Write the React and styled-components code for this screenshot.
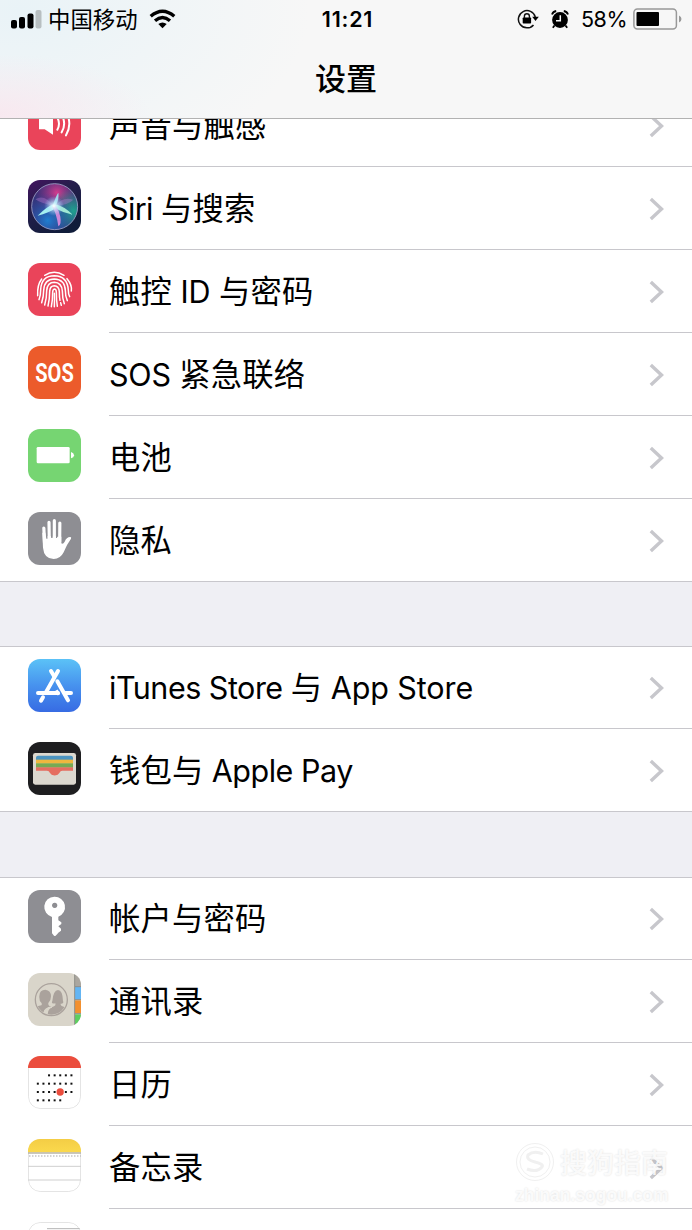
import React from "react";
import styled, { createGlobalStyle, css } from "styled-components";

const GlobalStyle = createGlobalStyle`
    * {
        box-sizing: border-box;
    }
    body {
        margin: 0;
        background-color: #ffffff;
        overflow: hidden;
    }
`;

const Screen = styled.div`
    position: relative;
    display: flex;
    flex-direction: column;
    width: 692px;
    height: 1230px;
    overflow: hidden;
    background-color: #ffffff;
    color: #000000;
    font-family: Inter, "Noto Sans CJK SC", sans-serif;
`;

const Header = styled.header`
    flex: none;
    height: 119px;
    border-bottom: 1px solid #b2b2b2;
    background: radial-gradient(
            ellipse 150px 60px at 0 114px,
            rgba(250, 228, 237, 0.75),
            rgba(250, 228, 237, 0) 100%
        ),
        radial-gradient(
            ellipse 290px 170px at 20px 10px,
            #e9f3f7,
            rgba(247, 247, 247, 0) 100%
        ),
        #f7f7f7;
`;

const StatusBar = styled.div`
    display: grid;
    grid-template-columns: 1fr auto 1fr;
    align-items: center;
    height: 38px;
    padding: 0 10px 0 11px;
`;

const StatusSide = styled.div`
    display: flex;
    align-items: center;
    justify-content: ${(props) => (props.$end ? "flex-end" : "flex-start")};

    svg {
        flex: none;
        display: block;
    }
`;

const StatusIcons = styled.div`
    display: flex;
    align-items: center;
    gap: 12px;
`;

const Carrier = styled.span`
    height: 38px;
    margin: 0 11px 0 6px;
    font-family: "Noto Sans CJK SC", sans-serif;
    font-size: 22.4px;
    line-height: 36px;
`;

const Clock = styled.span`
    padding-left: 2px;
    font-size: 21.5px;
    font-weight: 600;
    letter-spacing: 0.8px;
    line-height: 38px;
`;

const Percent = styled.span`
    margin: 0 6px 0 12px;
    font-size: 21.5px;
    letter-spacing: -0.5px;
    line-height: 38px;
`;

const Title = styled.h1`
    margin: 0;
    height: 80px;
    font-family: "Noto Sans CJK SC", sans-serif;
    font-size: 31px;
    font-weight: 500;
    line-height: 77px;
    text-align: center;
`;

const List = styled.main`
    flex: 1;
    min-height: 0;
    overflow: hidden;
    background-color: #efeff4;
`;

const Group = styled.section`
    background-color: #ffffff;
    ${(props) =>
        props.$scrolled &&
        css`
            margin-top: -35px;
        `}
    ${(props) =>
        props.$gap &&
        css`
            margin-top: ${props.$gap}px;
            box-shadow: inset 0 1px 0 #c8c7cc;
        `}
`;

const Row = styled.div`
    display: flex;
    height: 83px;
    padding-left: 28px;

    &:last-child {
        border-bottom: 1px solid #c8c7cc;
    }
`;

const IconBox = styled.div`
    flex: none;
    width: 53px;
    height: 53px;
    margin: 13px 28px 0 0;

    svg {
        display: block;
        border-radius: 12px;
    }
`;

const RowBody = styled.div`
    flex: 1;
    display: flex;
    align-items: center;
    justify-content: space-between;
    padding: 1px 27px 0 0;
    border-bottom: 1px solid #c8c7cc;

    ${Row}:last-child & {
        border-bottom: none;
    }
`;

const Label = styled.span`
    display: flex;
    align-items: baseline;
    height: 82px;
    line-height: 77px;
    white-space: pre;
`;

const Han = styled.span`
    font-family: "Noto Sans CJK SC", sans-serif;
    font-size: 31.3px;
    letter-spacing: 0.2px;
`;

const Latin = styled.span`
    font-family: Inter, sans-serif;
    font-size: 30.5px;
    letter-spacing: ${(props) => props.$spacing || 0}px;
`;

const Watermark = styled.div`
    position: absolute;
    left: 515px;
    top: 1140px;
    display: flex;
    flex-direction: column;
    color: rgba(255, 255, 255, 0.85);
    text-shadow: 0 0 2px rgba(0, 0, 0, 0.14);
`;

const WatermarkBrand = styled.div`
    display: flex;
    align-items: center;
    gap: 5px;
    height: 43px;
    font-family: "Noto Sans CJK SC", sans-serif;
    font-size: 27px;
    font-weight: 500;
`;

const WatermarkSite = styled.div`
    font-family: "Liberation Sans", sans-serif;
    font-size: 17.5px;
    font-weight: 700;
    line-height: 25px;
`;

const Icon = ({ children }) => (
    <svg width="53" height="53" viewBox="0 0 159 159">
        {children}
    </svg>
);

const SoundIcon = () => (
    <Icon>
        <rect width="159" height="159" fill="#ea445a" />
        <path d="M33 65h17l25-22v70L50 97H33z" fill="#fff" />
        <g fill="none" stroke="#fff" strokeWidth="6" strokeLinecap="round">
            <path d="M88 62q10 18 0 36" />
            <path d="M101 54q15 26 0 52" />
            <path d="M114 45q20 35 0 70" />
        </g>
    </Icon>
);

const SiriIcon = () => (
    <Icon>
        <defs>
            <linearGradient id="siriBg" x1="0" y1="0" x2="0.6" y2="1">
                <stop offset="0" stopColor="#43145f" />
                <stop offset="0.45" stopColor="#241e4b" />
                <stop offset="1" stopColor="#101c3a" />
            </linearGradient>
            <radialGradient id="siriPink" cx="0.55" cy="0.2" r="0.5">
                <stop offset="0" stopColor="#d33d8d" />
                <stop offset="1" stopColor="#8b2f8c" stopOpacity="0" />
            </radialGradient>
            <radialGradient id="siriTeal" cx="0.9" cy="0.6" r="0.5">
                <stop offset="0" stopColor="#1fa38f" />
                <stop offset="1" stopColor="#1fa38f" stopOpacity="0" />
            </radialGradient>
            <radialGradient id="siriBlue" cx="0.35" cy="0.8" r="0.6">
                <stop offset="0" stopColor="#1f7fd0" />
                <stop offset="1" stopColor="#2d4fae" stopOpacity="0" />
            </radialGradient>
            <radialGradient id="siriGlow">
                <stop offset="0" stopColor="#fff" />
                <stop offset="0.3" stopColor="#d4f4ff" stopOpacity="0.75" />
                <stop offset="1" stopColor="#8fd0ff" stopOpacity="0" />
            </radialGradient>
        </defs>
        <rect width="159" height="159" fill="url(#siriBg)" />
        <circle cx="80" cy="80" r="69" fill="#343276" />
        <circle cx="80" cy="80" r="69" fill="url(#siriPink)" />
        <circle cx="80" cy="80" r="69" fill="url(#siriTeal)" />
        <circle cx="80" cy="80" r="69" fill="url(#siriBlue)" />
        <path
            d="M78 78Q40 70 22 58Q48 40 78 78Q82 45 91 38Q98 55 82 78Q104 48 136 59Q120 75 82 78z"
            fill="#bf82d8"
            opacity="0.35"
        />
        <path d="M78 72Q58 78 29 107Q62 98 80 86z" fill="#a4f0f0" />
        <path d="M80 72Q108 78 134 104Q105 98 79 84z" fill="#a1e9d4" />
        <path d="M72 80Q85 96 91 139Q101 134 97 110Q94 93 84 78z" fill="#ca86d8" />
        <path d="M75 74Q84 48 91 38Q93 60 83 77z" fill="#9fd8e7" />
        <circle cx="78" cy="78" r="30" fill="url(#siriGlow)" />
        <circle
            cx="80"
            cy="80"
            r="69"
            fill="none"
            stroke="#a6aace"
            strokeOpacity="0.8"
            strokeWidth="3"
        />
    </Icon>
);

const TouchIdIcon = () => (
    <Icon>
        <rect width="159" height="159" fill="#ea445a" />
        <g fill="none" stroke="#fff" strokeWidth="4.500" strokeLinecap="round">
            <path d="M50 37Q79 19 108 37" />
            <path d="M29 98Q27 66 41 48M117 47Q133 66 130 84" />
            <path d="M33 110Q38 98 38 80Q40 38 79 38Q119 39 121 82Q121 94 125 101" />
            <path d="M41 119Q47 101 47 82Q49 48 79 48Q110 49 112 82Q112 101 118 113" />
            <path d="M50 126Q56 107 56 83Q58 58 79 58Q101 59 103 84Q103 107 109 122" />
            <path d="M60 129Q65 108 65 85Q66 68 79 68Q93 69 94 86Q94 102 96 112" />
            <path d="M70 131Q74 111 74 87Q75 78 80 78Q85 79 85 88Q85 112 88 130" />
            <path d="M79 91Q80 113 79 131M98 119L100 127" />
        </g>
    </Icon>
);

const SosIcon = () => (
    <Icon>
        <rect width="159" height="159" fill="#ec5b2b" />
        <text
            transform="translate(79.500 107) scale(0.8 1)"
            textAnchor="middle"
            fill="#fff"
            fontFamily="Roboto, sans-serif"
            fontSize="75"
            fontWeight="700"
        >
            SOS
        </text>
    </Icon>
);

const BatteryIcon = () => (
    <Icon>
        <rect width="159" height="159" fill="#76d572" />
        <rect x="26" y="54" width="99" height="49" rx="4" fill="#fff" />
        <path d="M129 69q9 3 9 9.500t-9 9.500z" fill="#fff" />
    </Icon>
);

const PrivacyIcon = () => (
    <Icon>
        <rect width="159" height="159" fill="#8e8e93" />
        <g stroke="#fff" strokeWidth="9.500" strokeLinecap="round">
            <path d="M47.500 48L50 100M63 31L64 90M79 26V90M95.500 33L95 90" />
        </g>
        <path
            d="M43 62L45 107Q48 140 77 141Q97 141 107 121Q115 99 129 80Q131 74 126 75Q116 75 110 89Q105 98 100 94V74H88L87 78H84L83 72H75L74 78H70L68 72H59V80H55L52 62z"
            fill="#fff"
        />
    </Icon>
);

const AppStoreIcon = () => (
    <Icon>
        <defs>
            <linearGradient id="storeBg" x1="0" y1="0" x2="0" y2="1">
                <stop offset="0" stopColor="#5bc2f7" />
                <stop offset="0.5" stopColor="#4792ee" />
                <stop offset="1" stopColor="#376be3" />
            </linearGradient>
        </defs>
        <rect width="159" height="159" fill="url(#storeBg)" />
        <g fill="none" stroke="#fff" strokeWidth="12" strokeLinecap="round">
            <path d="M90 36L54 100M45 115L39 125" />
            <path d="M69 36L78 51M88 67L120 124" />
            <path d="M30 102H90M113 102H129" />
        </g>
        <path d="M85 94L93 107" stroke="#fff" strokeWidth="9" />
    </Icon>
);

const WalletIcon = () => (
    <Icon>
        <rect width="159" height="159" fill="#1e1e20" />
        <rect x="15" y="33" width="129" height="95" rx="7" fill="#dcd8cf" />
        <path d="M24 54V47q0-6 6-6h98q7 0 7 6v7z" fill="#4b94c0" />
        <rect x="24" y="53" width="111" height="12" fill="#efb73e" />
        <rect x="24" y="64" width="111" height="13" fill="#77aa53" />
        <rect x="24" y="76" width="111" height="25" fill="#e56e60" />
        <path
            d="M18 86H57q6 0 9 7t14 8q11-1 14-8t9-7h38v35q0 5-5 5H23q-5 0-5-5z"
            fill="#dcd8cf"
        />
    </Icon>
);

const KeyIcon = () => (
    <Icon>
        <rect width="159" height="159" fill="#8e8e93" />
        <path
            fillRule="evenodd"
            fill="#fff"
            d="M79 20a31 31 0 0 1 12 60v11l9 6v5l-9 7 8 7v6l-8 6-3 4-6 6q-2 1-4-1l-6-7V81a31 31 0 0 1 7-61zm1 18a8 8 0 1 0 .1 0z"
        />
    </Icon>
);

const ContactsIcon = () => (
    <Icon>
        <defs>
            <clipPath id="contactsClip">
                <circle cx="70" cy="80" r="45" />
            </clipPath>
        </defs>
        <rect width="159" height="159" fill="#d9d5ca" />
        <rect x="141" width="18" height="41" fill="#aaa69f" />
        <rect x="141" y="41" width="18" height="38" fill="#63b5f3" />
        <rect x="141" y="82" width="18" height="38" fill="#f3902f" />
        <rect x="141" y="124" width="18" height="35" fill="#5dcf60" />
        <path
            d="M140 0V159M141 41H159M141 80H159M141 122H159"
            stroke="#8d8c87"
            strokeWidth="3"
        />
        <circle
            cx="70"
            cy="80"
            r="48"
            fill="none"
            stroke="#aaa29c"
            strokeWidth="4"
        />
        <g clipPath="url(#contactsClip)" fill="#aaa29c">
            <path d="M60 128Q56 108 78 100Q84 96 82 91Q68 94 73 84Q76 52 90 51Q104 52 105 84Q109 93 98 92Q97 98 103 100Q120 104 122 116V134H60z" />
            <path d="M14 112Q22 101 40 97Q43 93 40 89Q33 83 34 69Q35 50 52 50Q69 52 69 70Q69 83 61 90Q60 95 63 98Q68 99 71 102Q52 104 48 118V134H14z" />
        </g>
        <path
            d="M48 120Q50 105 72 102"
            fill="none"
            stroke="#d9d5ca"
            strokeWidth="4"
        />
    </Icon>
);

const calendarDots = [
    { y: 58, from: 2, to: 6 },
    { y: 83, from: 0, to: 6 },
    { y: 108, from: 0, to: 6 },
    { y: 133, from: 0, to: 4 },
];

const CalendarIcon = () => (
    <Icon>
        <rect
            x="1.500"
            y="1.500"
            width="156"
            height="156"
            rx="35"
            fill="#fff"
            stroke="#e4e4e4"
            strokeWidth="3"
        />
        <rect width="159" height="36" fill="#eb4d3d" />
        {calendarDots.map(({ y, from, to }) =>
            Array.from({ length: to - from + 1 }, (_, i) => (
                <rect
                    key={`${y}-${i}`}
                    x={26.5 + (from + i) * 16.8}
                    y={y - 3}
                    width="6"
                    height="6"
                    fill="#111"
                />
            ))
        )}
        <circle cx="96.500" cy="108" r="11" fill="#eb4d3d" />
    </Icon>
);

const NotesIcon = () => (
    <Icon>
        <defs>
            <linearGradient id="notesTop" x1="0" y1="0" x2="0" y2="1">
                <stop offset="0" stopColor="#f4cd45" />
                <stop offset="1" stopColor="#fad94d" />
            </linearGradient>
        </defs>
        <rect
            x="1.500"
            y="1.500"
            width="156"
            height="156"
            rx="35"
            fill="#fff"
            stroke="#e4e4e4"
            strokeWidth="3"
        />
        <rect width="159" height="40" fill="url(#notesTop)" />
        <path d="M0 42H159" stroke="#b9b5a6" strokeWidth="5" />
        <path
            d="M4 51H159"
            stroke="#bdbdbd"
            strokeWidth="6"
            strokeDasharray="3 6"
        />
        <path d="M0 82H159M0 123H159" stroke="#cfcfcf" strokeWidth="3" />
    </Icon>
);

const RemindersIcon = () => (
    <Icon>
        <rect
            x="1.500"
            y="1.500"
            width="156"
            height="156"
            rx="35"
            fill="#fff"
            stroke="#e4e4e4"
            strokeWidth="3"
        />
        <path d="M57 20H159" stroke="#b5b5b5" strokeWidth="3" />
    </Icon>
);

const Chevron = () => (
    <svg width="16" height="24" viewBox="0 0 16 24">
        <path
            d="M1.800 2L12.500 12L1.800 22"
            fill="none"
            stroke="#c7c7cc"
            strokeWidth="3.400"
        />
    </svg>
);

const SignalBars = () => (
    <svg width="31" height="20" viewBox="0 0 31 20">
        <rect x="0" y="11" width="6" height="8.500" rx="2" />
        <rect x="8" y="8" width="6" height="11.500" rx="2" />
        <rect x="16.500" y="4.500" width="6" height="15" rx="2" />
        <rect x="24.500" y="1" width="6" height="18.500" rx="2" fill="#b8bfc1" />
    </svg>
);

const Wifi = () => (
    <svg width="27" height="20" viewBox="0 0 27 20">
        <g fill="none" stroke="#000" strokeWidth="3.400">
            <path d="M1.700 7.300Q13.500 -2.800 25.300 7.300" />
            <path d="M6 11.700Q13.500 5.200 21 11.700" />
        </g>
        <path d="M9.300 15.100Q13.500 11.700 17.700 15.100L13.500 19.200z" />
    </svg>
);

const RotationLock = () => (
    <svg width="22" height="20" viewBox="0 0 22 20">
        <path
            d="M16.500 15.900A8.600 8.600 0 1 1 18.300 8"
            fill="none"
            stroke="#111"
            strokeWidth="1.500"
        />
        <path d="M15.200 7.700H21.800L18.500 12z" />
        <rect x="5.700" y="8.500" width="8.400" height="6" rx="0.800" />
        <path
            d="M7.400 9V7.300a2.500 2.500 0 0 1 5 0V9"
            fill="none"
            stroke="#111"
            strokeWidth="1.400"
        />
    </svg>
);

const Alarm = () => (
    <svg width="18" height="19" viewBox="0 0 18 19">
        <circle cx="9" cy="10" r="7.900" />
        <path
            d="M1 4.600Q2 1.400 5.200 1M17 4.600Q16 1.400 12.800 1M3.500 15.500L1.800 17.800M14.500 15.500L16.200 17.800"
            fill="none"
            stroke="#000"
            strokeWidth="1.800"
        />
        <path
            d="M9.300 5.200V10.700H5"
            fill="none"
            stroke="#f7f7f7"
            strokeWidth="1.500"
        />
    </svg>
);

const BatteryLevel = () => (
    <svg width="49" height="22" viewBox="0 0 49 22">
        <rect
            x="0.900"
            y="1"
            width="42.500"
            height="20"
            rx="3.500"
            fill="none"
            stroke="#999"
            strokeWidth="1.500"
        />
        <rect x="3.500" y="4" width="22.500" height="14" rx="1" />
        <path d="M46 7.500q2.500 1 2.500 3.500t-2.500 3.500z" fill="#999" />
    </svg>
);

// spacing: letter-spacing of each latin run, by its position in the label
const groups = [
    {
        scrolled: true,
        rows: [
            { label: "声音与触感", icon: SoundIcon },
            { label: "Siri 与搜索", icon: SiriIcon, spacing: [-0.6] },
            { label: "触控 ID 与密码", icon: TouchIdIcon, spacing: [0, -0.1] },
            { label: "SOS 紧急联络", icon: SosIcon, spacing: [-0.2] },
            { label: "电池", icon: BatteryIcon },
            { label: "隐私", icon: PrivacyIcon },
        ],
    },
    {
        gap: 64,
        rows: [
            {
                label: "iTunes Store 与 App Store",
                icon: AppStoreIcon,
                spacing: [-0.5, 0, -0.1],
            },
            {
                label: "钱包与 Apple Pay",
                icon: WalletIcon,
                spacing: [0, -0.45],
            },
        ],
    },
    {
        gap: 65,
        rows: [
            { label: "帐户与密码", icon: KeyIcon },
            { label: "通讯录", icon: ContactsIcon },
            { label: "日历", icon: CalendarIcon },
            { label: "备忘录", icon: NotesIcon },
            { label: "", icon: RemindersIcon },
        ],
    },
];

const SettingsRow = ({ label, icon: RowIcon, spacing = [] }) => (
    <Row>
        <IconBox>
            <RowIcon />
        </IconBox>
        <RowBody>
            <Label>
                {label
                    .split(/([\x20-\x7e]+)/)
                    .filter(Boolean)
                    .map((part, i) =>
                        /[\x20-\x7e]/.test(part) ? (
                            <Latin key={i} $spacing={spacing[i]}>
                                {part}
                            </Latin>
                        ) : (
                            <Han key={i}>{part}</Han>
                        )
                    )}
            </Label>
            <Chevron />
        </RowBody>
    </Row>
);

const App = () => {
    return (
        <>
            <GlobalStyle />
            <Screen>
                <Header>
                    <StatusBar>
                        <StatusSide>
                            <SignalBars />
                            <Carrier>中国移动</Carrier>
                            <Wifi />
                        </StatusSide>
                        <Clock>11:21</Clock>
                        <StatusSide $end>
                            <StatusIcons>
                                <RotationLock />
                                <Alarm />
                            </StatusIcons>
                            <Percent>58%</Percent>
                            <BatteryLevel />
                        </StatusSide>
                    </StatusBar>
                    <Title>设置</Title>
                </Header>
                <List>
                    {groups.map(({ scrolled, gap, rows }, i) => (
                        <Group key={i} $scrolled={scrolled} $gap={gap}>
                            {rows.map((row) => (
                                <SettingsRow key={row.label} {...row} />
                            ))}
                        </Group>
                    ))}
                </List>
                <Watermark>
                    <WatermarkBrand>
                        <svg width="40" height="40" viewBox="0 0 40 40">
                            <g fill="none" stroke="#f0f0f0">
                                <circle cx="20" cy="20" r="18.500" />
                                <circle cx="20" cy="20" r="15" />
                                <path
                                    d="M28 12Q19 8 13 13Q11 18 20 20T27 25Q22 31 12 27"
                                    strokeWidth="3"
                                />
                            </g>
                        </svg>
                        <span>搜狗指南</span>
                    </WatermarkBrand>
                    <WatermarkSite>zhinan.sogou.com</WatermarkSite>
                </Watermark>
            </Screen>
        </>
    );
};

export default App;
